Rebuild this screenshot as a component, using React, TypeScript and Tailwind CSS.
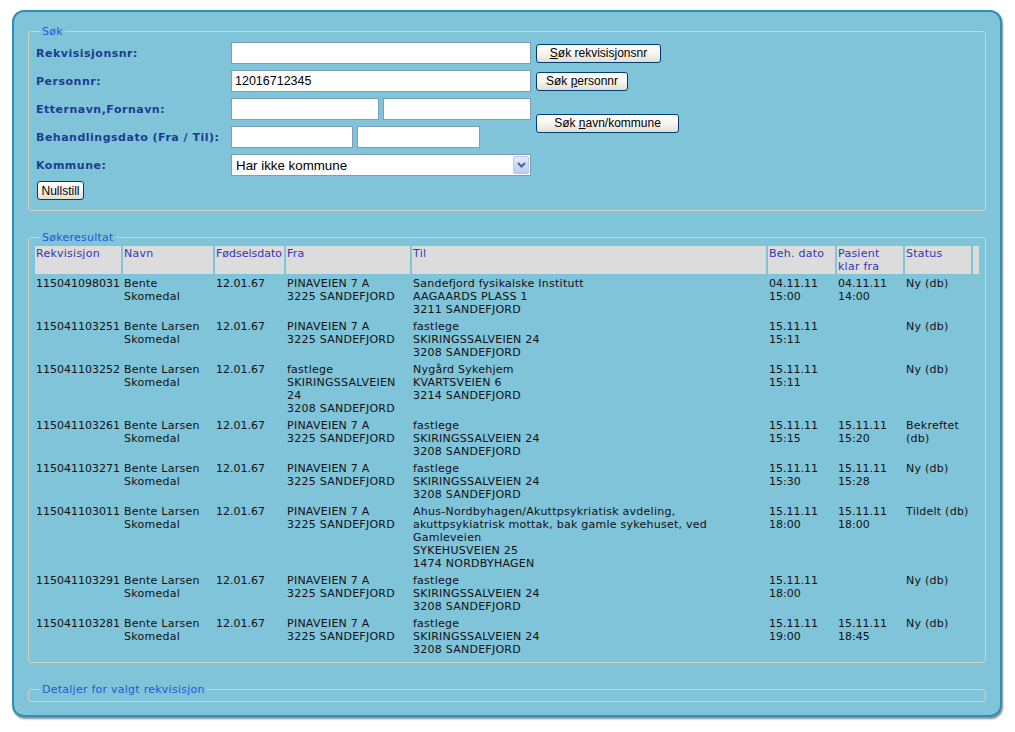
import React from 'react';

type Row = {
  nr: string;
  navn: string[];
  fdato: string;
  fra: string[];
  til: string[];
  beh: string[];
  klar: string[];
  status: string[];
};

const larsen = ['Bente Larsen', 'Skomedal'];
const pinaveien = ['PINAVEIEN 7 A', '3225 SANDEFJORD'];
const fastlege = ['fastlege', 'SKIRINGSSALVEIEN 24', '3208 SANDEFJORD'];

const rows: Row[] = [
  {
    nr: '115041098031',
    navn: ['Bente', 'Skomedal'],
    fdato: '12.01.67',
    fra: pinaveien,
    til: ['Sandefjord fysikalske Institutt', 'AAGAARDS PLASS 1', '3211 SANDEFJORD'],
    beh: ['04.11.11', '15:00'],
    klar: ['04.11.11', '14:00'],
    status: ['Ny (db)'],
  },
  {
    nr: '115041103251',
    navn: larsen,
    fdato: '12.01.67',
    fra: pinaveien,
    til: fastlege,
    beh: ['15.11.11', '15:11'],
    klar: [],
    status: ['Ny (db)'],
  },
  {
    nr: '115041103252',
    navn: larsen,
    fdato: '12.01.67',
    fra: ['fastlege', 'SKIRINGSSALVEIEN', '24', '3208 SANDEFJORD'],
    til: ['Nygård Sykehjem', 'KVARTSVEIEN 6', '3214 SANDEFJORD'],
    beh: ['15.11.11', '15:11'],
    klar: [],
    status: ['Ny (db)'],
  },
  {
    nr: '115041103261',
    navn: larsen,
    fdato: '12.01.67',
    fra: pinaveien,
    til: fastlege,
    beh: ['15.11.11', '15:15'],
    klar: ['15.11.11', '15:20'],
    status: ['Bekreftet', '(db)'],
  },
  {
    nr: '115041103271',
    navn: larsen,
    fdato: '12.01.67',
    fra: pinaveien,
    til: fastlege,
    beh: ['15.11.11', '15:30'],
    klar: ['15.11.11', '15:28'],
    status: ['Ny (db)'],
  },
  {
    nr: '115041103011',
    navn: larsen,
    fdato: '12.01.67',
    fra: pinaveien,
    til: [
      'Ahus-Nordbyhagen/Akuttpsykriatisk avdeling,',
      'akuttpsykiatrisk mottak, bak gamle sykehuset, ved',
      'Gamleveien',
      'SYKEHUSVEIEN 25',
      '1474 NORDBYHAGEN',
    ],
    beh: ['15.11.11', '18:00'],
    klar: ['15.11.11', '18:00'],
    status: ['Tildelt (db)'],
  },
  {
    nr: '115041103291',
    navn: larsen,
    fdato: '12.01.67',
    fra: pinaveien,
    til: fastlege,
    beh: ['15.11.11', '18:00'],
    klar: [],
    status: ['Ny (db)'],
  },
  {
    nr: '115041103281',
    navn: larsen,
    fdato: '12.01.67',
    fra: pinaveien,
    til: fastlege,
    beh: ['15.11.11', '19:00'],
    klar: ['15.11.11', '18:45'],
    status: ['Ny (db)'],
  },
];

function Lines({ lines }: { lines: string[] }) {
  return (
    <>
      {lines.map((l, i) => (
        <div key={i} className="whitespace-nowrap">
          {l}
        </div>
      ))}
    </>
  );
}

function XpButton({ children, className = '' }: { children: React.ReactNode; className?: string }) {
  return (
    <button
      type="button"
      className={
        "h-[19px] rounded-[3px] border border-[#003c74] bg-linear-to-b from-white via-[#f6f5ef] to-[#e2dfd2] font-['Liberation_Sans',Arial,sans-serif] text-[12px] leading-none tracking-normal text-black " +
        className
      }
    >
      {children}
    </button>
  );
}

const label = 'text-[11px] font-bold leading-[13px] tracking-[0.5px] text-[#1c3d8f]';
const input =
  "h-[22px] border border-[#7f9db9] bg-white px-[3px] font-['Liberation_Sans',Arial,sans-serif] text-[12.5px] tracking-normal text-black outline-none";
const legend = 'px-[2px] text-[11px] leading-[13px] text-[#2358d8]';
const th = 'bg-[#dcdcdc] px-[1px] py-[1px] text-left align-top font-normal text-[#3535b5]';
const td = 'px-[1px] py-[1px] align-top';

export default function App() {
  return (
    <div className="min-h-[732px] w-[1015px] bg-white pt-[10px] pl-[12px] font-['DejaVu_Sans',Verdana,sans-serif] text-[11px] leading-[13px] tracking-[0.25px] text-[#111]">
      <div className="w-[990px] rounded-[12px] border-2 border-[#2f8fb6] bg-[#80c4da] px-[14px] pt-[13px] pb-[13px] shadow-[1px_2px_2px_rgba(0,0,0,0.45)]">
        {/* Søk */}
        <fieldset className="rounded-[3px] border border-[#d5d1c3] px-[7px] pt-[4px] pb-[10px]">
          <legend className={'ml-[4px] ' + legend}>Søk</legend>
          <div className="grid grid-cols-[195px_300px_auto] items-center gap-y-[6px]">
            <span className={label}>Rekvisisjonsnr:</span>
            <input className={input + ' w-[300px]'} />
            <XpButton className="ml-[5px] w-[125px]">
              <span className="underline">S</span>øk rekvisisjonsnr
            </XpButton>

            <span className={label}>Personnr:</span>
            <input className={input + ' w-[300px]'} defaultValue="12016712345" />
            <XpButton className="ml-[5px] w-[92px]">
              Søk <span className="underline">p</span>ersonnr
            </XpButton>

            <span className={label}>Etternavn,Fornavn:</span>
            <div className="flex gap-[4px]">
              <input className={input + ' w-[148px]'} />
              <input className={input + ' w-[148px]'} />
            </div>
            <XpButton className="row-span-2 ml-[5px] w-[143px] self-center">
              Søk <span className="underline">n</span>avn/kommune
            </XpButton>

            <span className={label}>Behandlingsdato (Fra / Til):</span>
            <div className="flex gap-[4px]">
              <input className={input + ' w-[122px]'} />
              <input className={input + ' w-[123px]'} />
            </div>

            <span className={label}>Kommune:</span>
            <div className="flex h-[22px] w-[300px] items-center justify-between border border-[#7f9db9] bg-white pr-[1px] pl-[4px] font-['Liberation_Sans',Arial,sans-serif] text-[13.33px] tracking-normal text-black">
              <span>Har ikke kommune</span>
              <span className="flex h-[18px] w-[16px] items-center justify-center rounded-[2px] border border-[#b5c7f2] bg-linear-to-b from-[#e2eafe] to-[#b9cbf6]">
                <svg width="9" height="6" viewBox="0 0 9 6">
                  <polyline points="1,1 4.5,4.5 8,1" fill="none" stroke="#4d6185" strokeWidth="2" />
                </svg>
              </span>
            </div>
            <div />
          </div>
          <XpButton className="mt-[5px] ml-[1px] w-[47px]">Nullstill</XpButton>
        </fieldset>

        {/* Søkeresultat */}
        <fieldset className="mt-[20px] rounded-[3px] border border-[#d5d1c3] px-[4px] pb-[3px]">
          <legend className={'ml-[7px] ' + legend}>Søkeresultat</legend>
          <table className="w-[948px] table-fixed border-separate border-spacing-[2px]">
            <colgroup>
              <col className="w-[86px]" />
              <col className="w-[90px]" />
              <col className="w-[69px]" />
              <col className="w-[124px]" />
              <col className="w-[354px]" />
              <col className="w-[67px]" />
              <col className="w-[66px]" />
              <col className="w-[66px]" />
              <col className="w-[6px]" />
            </colgroup>
            <thead>
              <tr>
                <th className={th}>Rekvisisjon</th>
                <th className={th}>Navn</th>
                <th className={th + ' tracking-normal'}>Fødselsdato</th>
                <th className={th}>Fra</th>
                <th className={th}>Til</th>
                <th className={th}>Beh. dato</th>
                <th className={th}>
                  Pasient
                  <br />
                  klar fra
                </th>
                <th className={th}>Status</th>
                <th className={th}></th>
              </tr>
            </thead>
            <tbody>
              {rows.map((r) => (
                <tr key={r.nr}>
                  <td className={td + ' tracking-normal'}>{r.nr}</td>
                  <td className={td}>
                    <Lines lines={r.navn} />
                  </td>
                  <td className={td + ' tracking-normal'}>{r.fdato}</td>
                  <td className={td}>
                    <Lines lines={r.fra} />
                  </td>
                  <td className={td}>
                    <Lines lines={r.til} />
                  </td>
                  <td className={td + ' tracking-normal'}>
                    <Lines lines={r.beh} />
                  </td>
                  <td className={td + ' tracking-normal'}>
                    <Lines lines={r.klar} />
                  </td>
                  <td className={td}>
                    <Lines lines={r.status} />
                  </td>
                  <td className={td}></td>
                </tr>
              ))}
            </tbody>
          </table>
        </fieldset>

        {/* Detaljer */}
        <fieldset className="mt-[20px] rounded-[3px] border border-[#d5d1c3] px-[7px] pb-[5px]">
          <legend className={'ml-[4px] ' + legend}>Detaljer for valgt rekvisisjon</legend>
        </fieldset>
      </div>
    </div>
  );
}
